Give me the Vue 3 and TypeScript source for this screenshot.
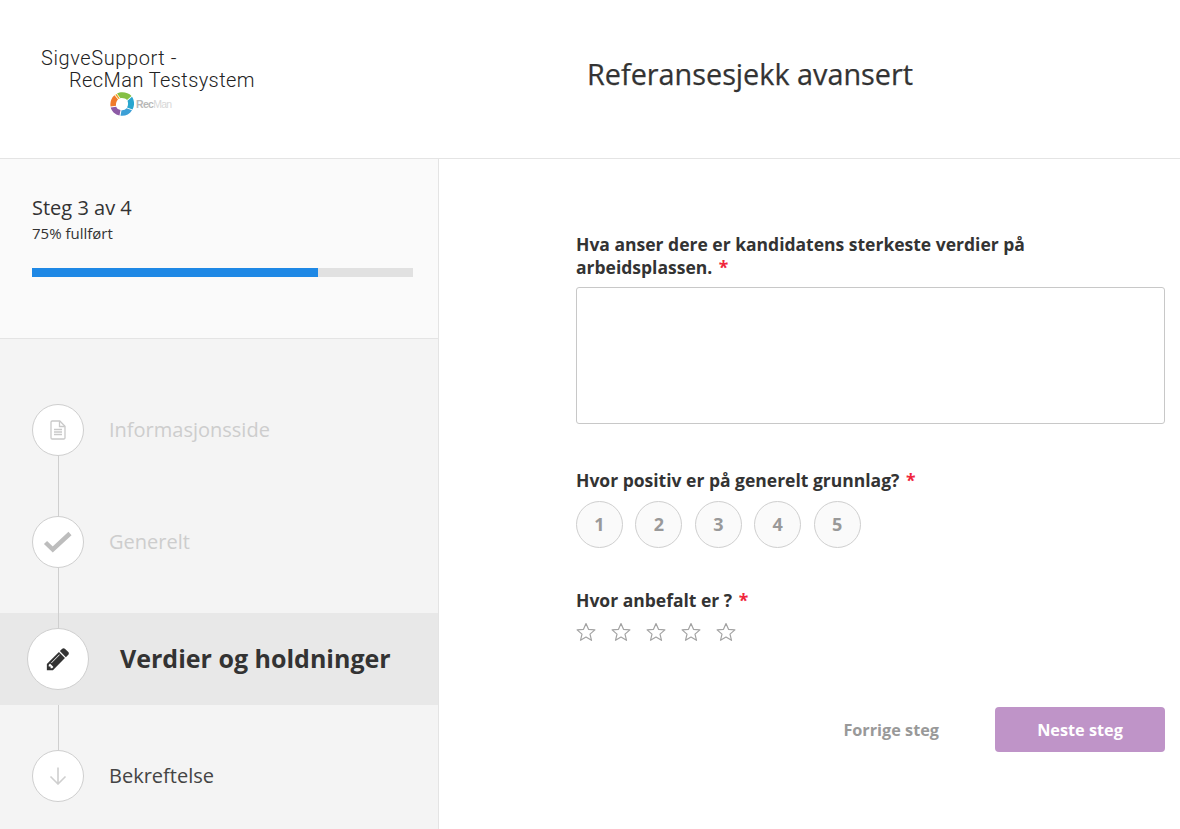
<script setup lang="ts">
const ratings: number[] = [1, 2, 3, 4, 5]
const progress = 75
</script>

<template>
  <div class="page">
    <header class="header">
      <div class="logo">
        <div class="logo-line">SigveSupport -</div>
        <div class="logo-line second">RecMan Testsystem</div>
        <div class="logo-mark">
          <svg width="24" height="24" viewBox="0 0 24 24">
            <path d="M7 1.500C11 -0.500 18 0 21.500 4L17 8C15.500 6.500 13 5.800 10.500 6.200Z" fill="#85bf45" />
            <path d="M22 4.800C24.800 9 24.500 14 22.500 17.500L17 15.500C18.300 13.500 18.300 10.800 17.500 8.800Z" fill="#29a6cf" />
            <path d="M22 18.300C19.500 22.500 15 24.300 10.500 23.700L11.500 18.200C13.500 18.400 15.500 17.700 16.500 16.300Z" fill="#3c9fd6" />
            <path d="M9.500 23.500C5 22.500 1.800 19.500 0.700 15.500L6.200 14.800C6.900 16.500 8.500 17.800 10.500 18Z" fill="#8d5ba6" />
            <path d="M0.500 14.500C0 10 1.500 5.500 4.500 3.200L8 7.500C6.500 9 5.800 11.500 6 13.800Z" fill="#ef7a2a" />
            <path d="M5.200 2.800C5.800 2.400 6 2.200 6.600 1.900L9.800 6.400C9.300 6.600 9 6.800 8.600 7Z" fill="#f4a11f" />
          </svg>
          <span class="logo-word"><b>Rec</b>Man</span>
        </div>
      </div>
      <h1 class="title">Referansesjekk avansert</h1>
    </header>

    <div class="body">
      <aside class="sidebar">
        <section class="status">
          <div class="status-step">Steg 3 av 4</div>
          <div class="status-pct">75% fullført</div>
          <div class="bar"><div class="bar-fill" :style="{ width: progress + '%' }"></div></div>
        </section>

        <nav class="steps">
          <div class="step done">
            <span class="circle">
              <svg width="16" height="20" viewBox="0 0 16 20" fill="none" stroke="#c9c9c9" stroke-width="1.300">
                <path d="M2.200 1h7.600L15 6.200V17.800a1.200 1.200 0 0 1-1.200 1.200H2.200A1.200 1.200 0 0 1 1 17.800V2.200A1.200 1.200 0 0 1 2.200 1Z" />
                <path d="M9.500 1.200V6.500H14.800M4 9.500H12M4 12H12M4 14.500H12" />
              </svg>
            </span>
            <span class="step-label">Informasjonsside</span>
          </div>
          <div class="line tall"></div>
          <div class="step done">
            <span class="circle">
              <svg width="30" height="24" viewBox="0 0 30 24" fill="none" stroke="#bdbdbd" stroke-width="4.500">
                <path d="M2.500 12.500L9.800 19.500L27 3.500" />
              </svg>
            </span>
            <span class="step-label">Generelt</span>
          </div>
          <div class="line short"></div>
          <div class="step active">
            <span class="circle big">
              <svg width="26" height="26" viewBox="0 0 1792 1792" fill="#333">
                <path d="M491 1536l91-91-235-235-91 91v107h128v128h107zm523-928q0-22-22-22-10 0-17 7l-542 542q-7 7-7 17 0 22 22 22 10 0 17-7l542-542q7-7 7-17zm-54-192l416 416-832 832h-416v-416l832-832zm683 96q0 53-37 90l-166 166-416-416 165-166q36-38 90-38 53 0 91 38l235 234q37 39 37 91z" />
              </svg>
            </span>
            <span class="step-label">Verdier og holdninger</span>
          </div>
          <div class="line short"></div>
          <div class="step">
            <span class="circle">
              <svg width="18" height="18" viewBox="0 0 18 18" fill="none" stroke="#cfcfcf" stroke-width="1.600">
                <path d="M9 0.500V16.500M1.500 9.500L9 17L16.500 9.500" />
              </svg>
            </span>
            <span class="step-label">Bekreftelse</span>
          </div>
        </nav>
      </aside>

      <main class="main">
        <div class="question first">
          <label class="label wrap">Hva anser dere er kandidatens sterkeste verdier på arbeidsplassen. <span class="req">*</span></label>
          <textarea class="textarea"></textarea>
        </div>

        <div class="question second-q">
          <label class="label">Hvor positiv er på generelt grunnlag? <span class="req">*</span></label>
          <div class="ratings">
            <span v-for="n in ratings" :key="n" class="rating">{{ n }}</span>
          </div>
        </div>

        <div class="question third-q">
          <label class="label">Hvor anbefalt er ? <span class="req">*</span></label>
          <div class="stars">
            <svg v-for="n in ratings" :key="n" class="star" width="20" height="20" viewBox="0 0 20 20" fill="#fff" stroke="#a3a3a3" stroke-width="1.200" stroke-linejoin="round">
              <path d="M10 1.500L12.500 7.300L18.900 7.900L14 12.100L15.500 18.300L10 15L4.500 18.300L6 12.100L1.100 7.900L7.500 7.300Z" />
            </svg>
          </div>
        </div>

        <div class="actions">
          <button type="button" class="prev">Forrige steg</button>
          <button type="button" class="next">Neste steg</button>
        </div>
      </main>
    </div>
  </div>
</template>

<style>
html, body { margin: 0; background: #fff; }
</style>

<style scoped>
.page {
  height: 829px;
  overflow: hidden;
  display: flex;
  flex-direction: column;
  font-family: "Open Sans", "Noto Sans", sans-serif;
  color: #333;
}
.header {
  height: 158px;
  flex: none;
  border-bottom: 1px solid #e4e4e4;
  display: flex;
  align-items: center;
}
.logo {
  width: 587px;
  flex: none;
  box-sizing: border-box;
  padding: 0 0 0 41px;
  font-family: "Roboto", "Liberation Sans", sans-serif;
  font-weight: 300;
  font-size: 20px;
  line-height: 22px;
  color: #222;
  letter-spacing: 0.6px;
  margin-top: 4px;
}
.logo-line.second { padding-left: 28px; letter-spacing: 0.4px; }
.logo-mark {
  display: flex;
  align-items: center;
  margin: 1px 0 0 69px;
  line-height: 24px;
}
.logo-word {
  font-family: "Liberation Sans", sans-serif;
  font-size: 10.500px;
  font-weight: 400;
  letter-spacing: -0.7px;
  color: #d8d8d8;
  margin-left: 2px;
}
.logo-word b { color: #b9b9b9; font-weight: 700; }
.title {
  margin: -10px 0 0;
  font-size: 28.800px;
  font-weight: 400;
  line-height: 36px;
  color: #333;
  -webkit-text-stroke: 0.25px #333;
}
.body { flex: 1; display: flex; min-height: 0; }
.sidebar {
  width: 438px;
  flex: none;
  border-right: 1px solid #e4e4e4;
  background: #f4f4f4;
  display: flex;
  flex-direction: column;
}
.status {
  height: 179px;
  flex: none;
  background: #fafafa;
  border-bottom: 1px solid #e4e4e4;
  padding: 0 25px 0 32px;
}
.status-step { font-size: 20px; line-height: 28px; padding-top: 35px; }
.status-pct { font-size: 15px; line-height: 20px; margin-top: 1px; }
.bar { height: 9px; background: #e1e1e1; margin-top: 25px; }
.bar-fill { height: 100%; background: #1e88e5; }
.steps { padding-top: 65px; display: flex; flex-direction: column; }
.step { display: flex; align-items: center; height: 52px; padding-left: 32px; }
.circle {
  width: 52px;
  height: 52px;
  box-sizing: border-box;
  border-radius: 50%;
  border: 1px solid #cfcfcf;
  background: #fff;
  display: flex;
  align-items: center;
  justify-content: center;
  flex: none;
}
.step-label { font-size: 20px; margin: -2px 0 0 25px; color: #444; }
.done .step-label { color: #cdcdcd; }
.line { width: 1px; background: #cfcfcf; margin-left: 58px; }
.line.tall { height: 60px; }
.line.short { height: 45px; }
.step.active {
  height: 92px;
  background: #e8e8e8;
  padding-left: 27px;
  position: relative;
}
.step.active::before {
  content: "";
  position: absolute;
  left: 58px;
  top: 0;
  width: 1px;
  height: 15px;
  background: #cfcfcf;
}
.circle.big { width: 62px; height: 62px; }
.active .step-label { font-size: 25px; font-weight: 700; margin: -2px 0 0 31px; color: #333; }
.main { flex: 1; padding: 0 15px 0 137px; min-width: 0; }
.question { display: flex; flex-direction: column; }
.first { padding-top: 74px; }
.second-q { margin-top: 45px; }
.third-q { margin-top: 41px; }
.label { font-size: 17.500px; font-weight: 700; line-height: 23px; color: #333; }
.label.wrap { max-width: 500px; }
.req { color: #f0263c; margin-left: 2px; }
.textarea {
  height: 137px;
  box-sizing: border-box;
  border: 1px solid #c8c8c8;
  border-radius: 3px;
  margin-top: 8px;
  background: #fff;
  resize: none;
  display: block;
  width: 100%;
}
.ratings { display: flex; gap: 12.400px; margin-top: 9px; }
.rating {
  width: 47px;
  height: 47px;
  box-sizing: border-box;
  border-radius: 50%;
  border: 1px solid #cfcfcf;
  background: #fafafa;
  color: #999;
  font-size: 18px;
  font-weight: 700;
  padding-bottom: 2px;
  display: flex;
  align-items: center;
  justify-content: center;
}
.stars { display: flex; gap: 15px; margin-top: 10px; }
.star { display: block; }
.actions { display: flex; justify-content: flex-end; align-items: center; margin-top: 65px; }
.prev {
  border: 0;
  background: none;
  font-family: inherit;
  font-size: 16.250px;
  font-weight: 700;
  color: #999;
  padding: 0;
  margin-right: 56px;
}
.next {
  width: 170px;
  height: 45px;
  border: 0;
  border-radius: 4px;
  background: #bf94c8;
  color: #fff;
  font-family: inherit;
  font-size: 16.250px;
  font-weight: 700;
  padding: 0;
}
</style>
